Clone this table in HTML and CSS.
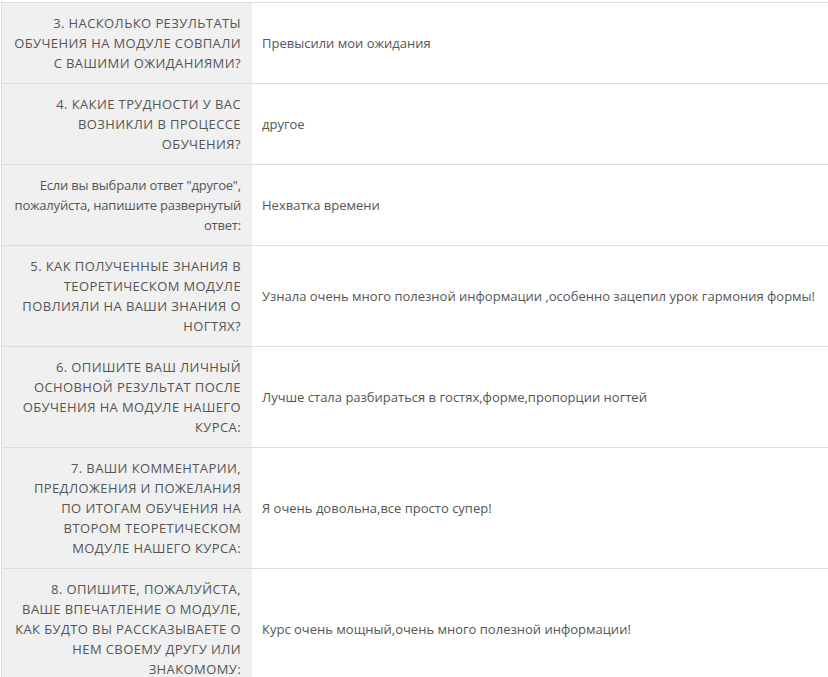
FILE: index.html
```html
<!DOCTYPE html>
<html lang="ru">
<head>
<meta charset="utf-8">
<link rel="stylesheet" href="styles.css">
</head>
<body>
<div class="answers">
<div class="row"><div class="q">3. Насколько результаты обучения на модуле совпали с вашими ожиданиями?</div><div class="a">Превысили мои ожидания</div></div>
<div class="row"><div class="q">4. Какие трудности у вас возникли в процессе обучения?</div><div class="a">другое</div></div>
<div class="row"><div class="q plain">Если вы выбрали ответ "другое", пожалуйста, напишите развернутый ответ:</div><div class="a">Нехватка времени</div></div>
<div class="row"><div class="q">5. Как полученные знания в теоретическом модуле повлияли на ваши знания о ногтях?</div><div class="a">Узнала очень много полезной информации ,особенно зацепил урок гармония формы!</div></div>
<div class="row"><div class="q">6. Опишите ваш личный основной результат после обучения на модуле нашего курса:</div><div class="a">Лучше стала разбираться в гостях,форме,пропорции ногтей</div></div>
<div class="row"><div class="q">7. Ваши комментарии, предложения и пожелания по итогам обучения на втором теоретическом модуле нашего курса:</div><div class="a">Я очень довольна,все просто супер!</div></div>
<div class="row"><div class="q">8. Опишите, пожалуйста, ваше впечатление о модуле, как будто вы рассказываете о нем своему другу или знакомому:</div><div class="a">Курс очень мощный,очень много полезной информации!</div></div>
</div>
</body>
</html>
```
FILE: styles.css
```css
html, body {
  margin: 0;
  padding: 0;
  background: #fff;
}
.answers {
  margin: 2px 0 0 1px;
  border-left: 1px solid #dddddd;
  font-family: "Open Sans", sans-serif;
  font-size: 13px;
  line-height: 20px;
  color: #555;
}
.row {
  display: grid;
  grid-template-columns: 250px 1fr;
  border-top: 1px solid #dddddd;
}
.q {
  background: #f0f0f0;
  text-align: right;
  text-transform: uppercase;
  letter-spacing: 0.4px;
  padding: 10px 11px 10px 8px;
}
.q.plain {
  text-transform: none;
  letter-spacing: -0.2px;
  padding-left: 4px;
}
.a {
  display: flex;
  align-items: center;
  padding: 10px 10px;
}
```
